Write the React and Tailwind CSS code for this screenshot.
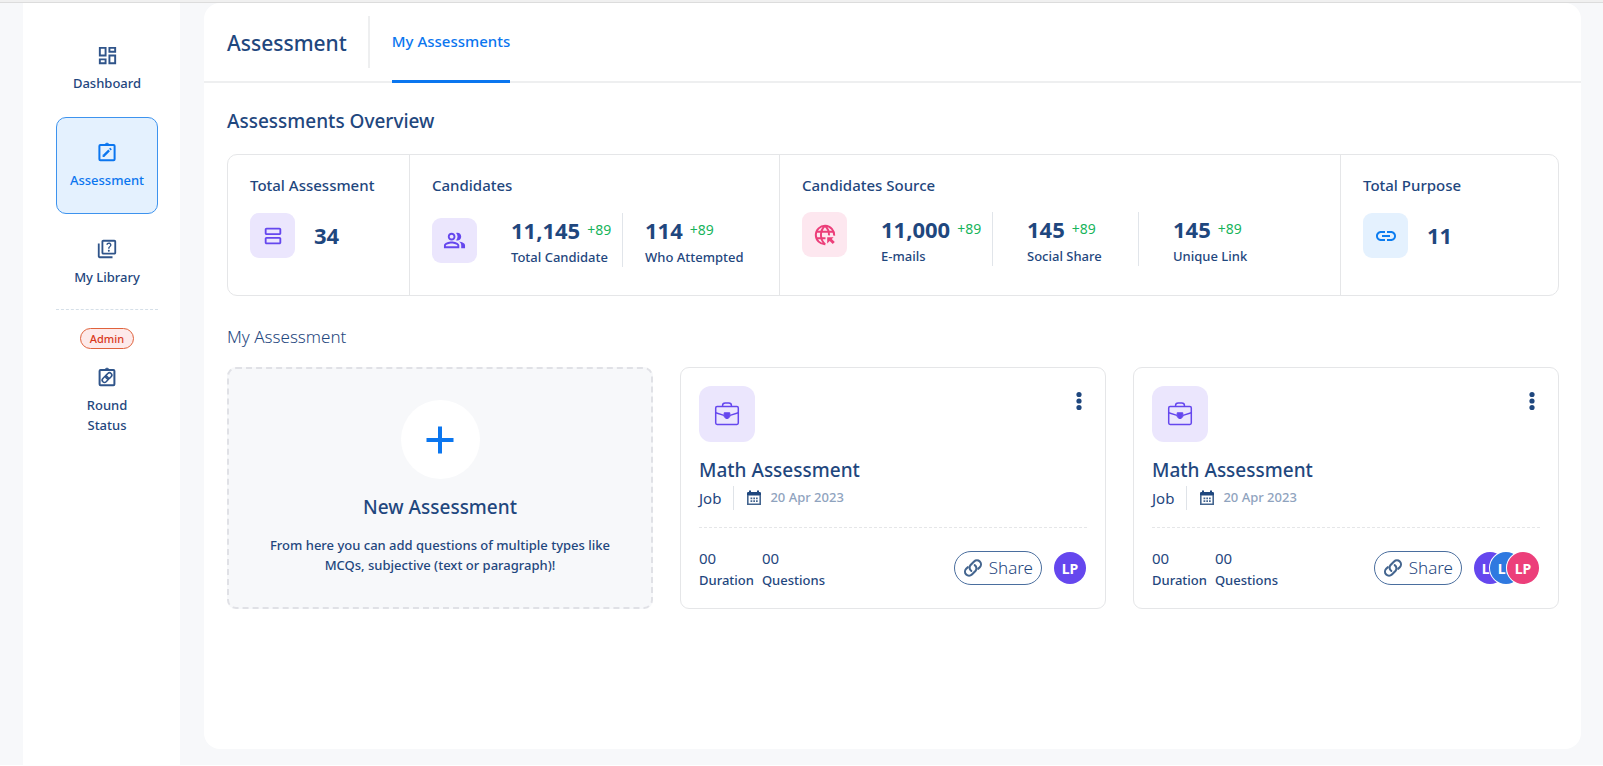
import {
  MdOutlineDashboard,
  MdOutlineQuiz,
  MdOutlineViewAgenda,
  MdOutlinePeopleAlt,
  MdLink,
} from "react-icons/md";

const BoardPencil = () => (
  <svg width="20" height="20" viewBox="0 0 20 20" fill="none" stroke="currentColor" strokeWidth="2">
    <rect x="2.4" y="3" width="15.2" height="15.2" rx="1" />
    <path d="M7.2 2.6Q8.2 2.4 8.6 1.6Q10 .2 11.4 1.6Q11.8 2.4 12.8 2.6Z" fill="currentColor" strokeWidth="0.6" />
    <path d="M6.6 13.9L12.1 8.4M12.9 7.6L14 6.5" strokeWidth="2.3" />
    <path d="M5.6 14.9V12.6L7.9 14.9Z" fill="currentColor" stroke="none" />
  </svg>
);

const ChainLoops = () => (
  <svg width="20" height="20" viewBox="0 0 20 20" fill="none" stroke="#44658f" strokeWidth="2.1" strokeLinecap="round">
    <path d="M8.3 12.9A3.9 3.9 0 0 1 7.6 7L11.1 3.5A4 4 0 0 1 16.8 9.2L15.2 10.8" />
    <path d="M11.7 7.1A3.9 3.9 0 0 1 12.4 13L8.9 16.5A4 4 0 0 1 3.2 10.8L4.8 9.2" />
  </svg>
);

const BoardChain = () => (
  <svg width="20" height="20" viewBox="0 0 20 20" fill="none" stroke="#2f548a" strokeWidth="2">
    <rect x="2.6" y="3" width="14.8" height="15.2" rx="1" />
    <path d="M7.2 2.6Q8.2 2.4 8.6 1.6Q10 .2 11.4 1.6Q11.8 2.4 12.8 2.6Z" fill="#2f548a" strokeWidth="0.6" />
    <g strokeWidth="1.6" transform="rotate(-45 10 10.6)">
      <rect x="4.2" y="8.3" width="6.6" height="4.6" rx="2.3" />
      <rect x="9.2" y="8.3" width="6.6" height="4.6" rx="2.3" />
    </g>
  </svg>
);

const GlobeArrow = () => (
  <svg width="22" height="22" viewBox="0 0 22 22" fill="none" stroke="currentColor" strokeWidth="2">
    <path d="M11.3 20.2A9.2 9.2 0 1 1 20.2 11.6" />
    <path d="M11 1.8C5.6 6.8 5.6 15.2 11 20.2M11 1.8C13.8 4.4 15.2 7.8 15 11.4" />
    <path d="M2.6 7.8H19.4M2.6 14.2H11.5" />
    <path d="M13.2 13.2H19.6L17.8 15L20.8 18L18.7 20.1L15.7 17.1L13.2 19.6Z" fill="currentColor" stroke="none" />
  </svg>
);

const Briefcase = () => (
  <svg width="26" height="26" viewBox="0 0 26 26" fill="none" stroke="currentColor" strokeWidth="1.5">
    <rect x="1.7" y="5.5" width="22.6" height="18" rx="1.4" />
    <path d="M8.6 5.5V4.3Q8.6 2 11.2 2H14.8Q17.4 2 17.4 4.3V5.5M1.7 11.8L10 14.4M24.3 11.8L16 14.4" />
    <path d="M10.2 11.8H15.8V15.6L14.2 17.4H11.8L10.2 15.6Z" fill="currentColor" strokeWidth="1" strokeLinejoin="round" />
  </svg>
);

const Calendar = () => (
  <svg width="16" height="16" viewBox="0 0 16 16" className="ml-3 shrink-0" fill="none">
    <path d="M1 3.2Q1 2 2.2 2H3V.5H5V2H11V.5H13V2H13.8Q15 2 15 3.2V5.5H1Z" fill="#1f477e" />
    <path d="M1.8 5V14.2H14.2V5" stroke="#44658f" strokeWidth="1.6" />
    <path d="M4.5 7.5H6.3V9.2H4.5ZM7.3 7.5H9V9.2H7.3ZM10 7.5H11.7V9.2H10ZM4.5 10.2H6.3V11.9H4.5ZM7.3 10.2H9V11.9H7.3ZM10 10.2H11.7V11.9H10Z" fill="#44658f" />
  </svg>
);

const Kebab = () => (
  <svg width="6" height="20" viewBox="0 0 6 20" fill="currentColor">
    <circle cx="3" cy="3.5" r="2.6" />
    <circle cx="3" cy="10" r="2.6" />
    <circle cx="3" cy="16.5" r="2.6" />
  </svg>
);

const Plus = () => (
  <svg width="28" height="28" viewBox="0 0 28 28" stroke="currentColor" strokeWidth="4">
    <path d="M14 .5V27.5M.5 14H27.5" />
  </svg>
);

function NavItem({ icon, label, active }) {
  return (
    <a
      href="#"
      aria-current={active ? "page" : undefined}
      className={
        "flex h-[97px] w-full flex-col items-center rounded-[10px] border pt-[22px] text-[13px] leading-5 font-medium " +
        (active ? "border-[#3d93ee] bg-[#e4f1fe] text-[#0b76ef]" : "border-transparent text-[#1f477e]")
      }
    >
      <span className="mb-1.5 flex h-6 items-center">{icon}</span>
      {label}
    </a>
  );
}

const tones = {
  violet: "bg-[#ebe6fd] text-[#6547ee]",
  pink: "bg-[#fde7ef] text-[#ec3f7a]",
  blue: "bg-[#e4f1fe] text-[#0b7cf0]",
};

function IconBox({ tone, children }) {
  return (
    <span className={"flex size-[45px] shrink-0 items-center justify-center rounded-[9px] " + tones[tone]}>
      {children}
    </span>
  );
}

function Metric({ value, label, className = "" }) {
  return (
    <div className={"h-[54px] " + className}>
      <p className="flex items-center leading-[34px]">
        <span className="text-[22px] font-bold">{value}</span>
        <span className="ml-[7px] text-[14px] text-[#17b45b]">+89</span>
      </p>
      <p className="text-[13px] leading-5 font-medium whitespace-nowrap">{label}</p>
    </div>
  );
}

function Avatar({ className }) {
  return (
    <span className={"flex size-8 items-center justify-center rounded-full text-[14px] font-bold text-white " + className}>
      LP
    </span>
  );
}

function AssessmentCard({ avatars }) {
  return (
    <article className="flex h-[242px] flex-col rounded-[9px] border border-[#e5e6e8] px-[18px] pt-[18px]">
      <div className="flex items-start justify-between">
        <span className="flex size-14 items-center justify-center rounded-xl bg-[#ebe6fd] text-[#6547ee]">
          <Briefcase />
        </span>
        <button aria-label="More options" className="mt-[5px] mr-[5px]">
          <Kebab />
        </button>
      </div>
      <h3 className="mt-3.5 text-[19px] leading-7 font-medium">Math Assessment</h3>
      <div className="mt-0.5 flex h-6 items-center">
        <span className="border-r border-[#dfe3e8] pr-3 text-[15px] leading-6">Job</span>
        <Calendar />
        <time className="ml-2 text-[13px] font-medium text-[#8fa3be]">20 Apr 2023</time>
      </div>
      <hr className="mt-[17px] border-dashed border-[#e5e6e8]" />
      <div className="mt-[19px] flex items-start">
        <div className="mr-2">
          <p className="text-[15px] leading-[22px]">00</p>
          <p className="text-[13px] leading-[22px] font-medium">Duration</p>
        </div>
        <div>
          <p className="text-[15px] leading-[22px]">00</p>
          <p className="text-[13px] leading-[22px] font-medium">Questions</p>
        </div>
        <button className="mt-1 ml-auto flex h-[34px] items-center gap-1.5 rounded-full border border-[#4a6e9e] px-2 text-[17px] font-light">
          <ChainLoops />
          Share
        </button>
        <div className="mt-[5px] mr-px ml-3 flex">
          {avatars.map((c, i) => (
            <Avatar key={i} className={c} />
          ))}
        </div>
      </div>
    </article>
  );
}

export default function App() {
  return (
    <div className="flex min-h-screen flex-col border-b border-white bg-[#f7f8fa] font-['Noto_Sans',sans-serif] text-[#1f477e]">
      <div className="h-[3px] border-b border-[#dcdcdc] bg-[#f0f0f0]" />
      <div className="flex flex-1 pr-[22px] pl-[23px]">
        <nav className="flex w-[157px] shrink-0 flex-col items-center bg-white pt-[17px] pr-[22px] pl-[33px]">
          <NavItem icon={<MdOutlineDashboard size={23} color="#2f548a" />} label="Dashboard" />
          <NavItem active icon={<BoardPencil />} label="Assessment" />
          <NavItem icon={<MdOutlineQuiz size={22} color="#2f548a" />} label="My Library" />
          <hr className="-mt-0.5 w-full border-dashed border-[#d5dfe8]" />
          <span className="mt-[18px] rounded-full border border-[#e0623c] bg-[#fdeaea] px-[9px] text-[11px] leading-[19px] font-medium text-[#d9381b]">
            Admin
          </span>
          <a href="#" className="mt-[18px] flex w-14 flex-col items-center gap-2 text-center text-[13px] leading-5 font-medium">
            <BoardChain />
            Round Status
          </a>
        </nav>

        <main className="mb-4 ml-6 min-w-0 flex-1 rounded-2xl bg-white">
          <header className="flex h-20 items-start border-b-2 border-[#eeeff0] pl-[23px]">
            <h1 className="mt-[13px] flex h-[52px] items-center border-r-2 border-[#eeeff0] pt-1 pr-[21px] text-[21px] font-medium">
              Assessment
            </h1>
            <a href="#" className="ml-[22px] h-20 border-b-[3px] border-[#0b76ef] pt-[26px] text-[15px] leading-6 font-medium text-[#0b76ef]">
              My Assessments
            </a>
          </header>

          <div className="pr-[22px] pl-[23px]">
            <h2 className="mt-6 text-[19px] leading-7 font-medium">Assessments Overview</h2>
            <section className="mt-[19px] flex h-[142px] divide-x divide-[#e5e6e8] rounded-[10px] border border-[#e5e6e8]">
              <div className="w-[182px] shrink-0 px-[22px] pt-[18px]">
                <h3 className="text-[15px] leading-6 font-medium whitespace-nowrap">Total Assessment</h3>
                <div className="mt-4 flex items-center gap-[19px]">
                  <IconBox tone="violet"><MdOutlineViewAgenda size={22} /></IconBox>
                  <span className="text-[22px] font-bold">34</span>
                </div>
              </div>
              <div className="w-[370px] shrink-0 px-[22px] pt-[18px]">
                <h3 className="text-[15px] leading-6 font-medium">Candidates</h3>
                <div className="mt-4 flex items-center">
                  <IconBox tone="violet"><MdOutlinePeopleAlt size={23} /></IconBox>
                  <Metric className="ml-[34px] w-[112px] border-r border-[#e1e5ea]" value="11,145" label="Total Candidate" />
                  <Metric className="ml-[22px]" value="114" label="Who Attempted" />
                </div>
              </div>
              <div className="min-w-0 flex-1 px-[22px] pt-[18px]">
                <h3 className="text-[15px] leading-6 font-medium">Candidates Source</h3>
                <div className="mt-[15px] flex items-start">
                  <IconBox tone="pink"><GlobeArrow /></IconBox>
                  <Metric className="ml-[34px] w-[112px] border-r border-[#e1e5ea]" value="11,000" label="E-mails" />
                  <Metric className="ml-[34px] w-[112px] border-r border-[#e1e5ea]" value="145" label="Social Share" />
                  <Metric className="ml-[34px]" value="145" label="Unique Link" />
                </div>
              </div>
              <div className="w-[217px] shrink-0 px-[22px] pt-[18px]">
                <h3 className="text-[15px] leading-6 font-medium">Total Purpose</h3>
                <div className="mt-4 flex items-center gap-[19px]">
                  <IconBox tone="blue"><MdLink size={24} /></IconBox>
                  <span className="text-[22px] font-bold">11</span>
                </div>
              </div>
            </section>

            <h2 className="mt-[27px] text-[17px] leading-7 font-light">My Assessment</h2>
            <section className="mt-4 grid grid-cols-3 gap-[27px]">
              <button className="flex h-[242px] flex-col items-center rounded-[9px] border-2 border-dashed border-[#e0e1e6] bg-[#f7f8fa] pt-[31px]">
                <span className="flex size-[79px] items-center justify-center rounded-full bg-white text-[#0b76ef]">
                  <Plus />
                </span>
                <span className="mt-3.5 text-[19px] leading-7 font-medium">New Assessment</span>
                <span className="mt-3.5 max-w-[350px] text-[13px] leading-5 font-medium">
                  From here you can add questions of multiple types like MCQs, subjective (text or paragraph)!
                </span>
              </button>
              <AssessmentCard avatars={["bg-[#6547ee]"]} />
              <AssessmentCard
                avatars={[
                  "bg-[#6547ee]",
                  "-ml-4 bg-[#2f79e0] ring-1 ring-white",
                  "-ml-[15px] bg-[#ec3f7a] ring-1 ring-white",
                ]}
              />
            </section>
          </div>
        </main>
      </div>
    </div>
  );
}
